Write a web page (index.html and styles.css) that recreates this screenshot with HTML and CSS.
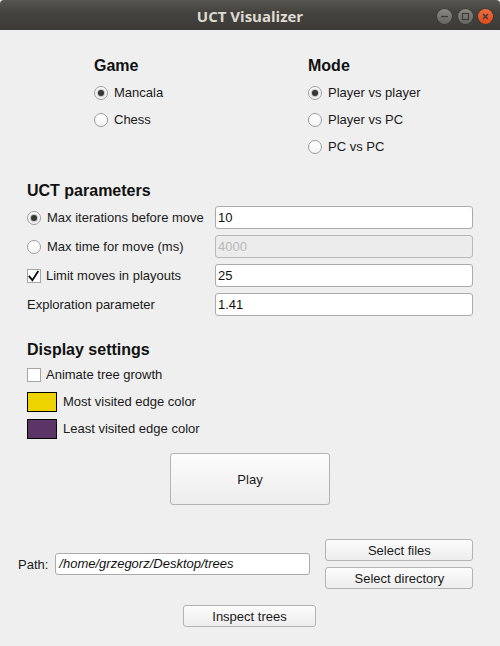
FILE: index.html
```html
<!DOCTYPE html>
<html>
<head>
<meta charset="utf-8">
<title>UCT Visualizer</title>
<link rel="stylesheet" href="styles.css">
</head>
<body>
<div class="window">
  <header class="titlebar">
    <div class="tb-side"></div>
    <div class="title">UCT Visualizer</div>
    <div class="tb-side wbtns">
      <span class="wbtn"><svg width="15" height="15" viewBox="0 0 15 15"><path d="M4 7.5 H11" stroke="#3c3b37" stroke-width="1.3" fill="none"/></svg></span>
      <span class="wbtn"><svg width="15" height="15" viewBox="0 0 15 15"><rect x="4.5" y="4.5" width="6" height="6" stroke="#3c3b37" stroke-width="1.2" fill="none"/></svg></span>
      <span class="wbtn close"><svg width="15" height="15" viewBox="0 0 15 15"><path d="M5 5 L10 10 M10 5 L5 10" stroke="#3c3b37" stroke-width="1.4" fill="none"/></svg></span>
    </div>
  </header>

  <main class="content">
    <section class="modes">
      <div class="col col-game">
        <h2 class="heading">Game</h2>
        <div class="opt"><span class="radio checked"></span>Mancala</div>
        <div class="opt"><span class="radio"></span>Chess</div>
      </div>
      <div class="col">
        <h2 class="heading">Mode</h2>
        <div class="opt"><span class="radio checked"></span>Player vs player</div>
        <div class="opt"><span class="radio"></span>Player vs PC</div>
        <div class="opt"><span class="radio"></span>PC vs PC</div>
      </div>
    </section>

    <section class="block">
      <h2 class="heading heading-uct">UCT parameters</h2>
      <div class="params">
        <div class="plabel"><span class="radio checked"></span>Max iterations before move</div>
        <div class="field">10</div>
        <div class="plabel"><span class="radio"></span>Max time for move (ms)</div>
        <div class="field disabled">4000</div>
        <div class="plabel plabel-cb"><span class="check"><svg width="14" height="14" viewBox="0 0 14 14"><path d="M2.4 7.6 L5.4 11.2 L10.8 2.8" stroke="#111" stroke-width="1.9" fill="none" stroke-linecap="square"/></svg></span>Limit moves in playouts</div>
        <div class="field">25</div>
        <div class="plabel">Exploration parameter</div>
        <div class="field">1.41</div>
      </div>
    </section>

    <section class="block">
      <h2 class="heading">Display settings</h2>
      <div class="drow drow-cb"><span class="check"></span>Animate tree growth</div>
      <div class="drow"><span class="swatch swatch-yellow"></span>Most visited edge color</div>
      <div class="drow"><span class="swatch swatch-purple"></span>Least visited edge color</div>
    </section>

    <div class="play-wrap">
      <button class="btn btn-play">Play</button>
    </div>

    <div class="path-row">
      <span class="path-label">Path:</span>
      <div class="field path-field">/home/grzegorz/Desktop/trees</div>
      <div class="path-btns">
        <button class="btn btn-small">Select files</button>
        <button class="btn btn-small">Select directory</button>
      </div>
    </div>

    <div class="inspect-wrap">
      <button class="btn btn-inspect">Inspect trees</button>
    </div>
  </main>
</div>
</body>
</html>
```

FILE: styles.css
```css
* { box-sizing: border-box; }

html, body {
  margin: 0;
  padding: 0;
}

body {
  width: 500px;
  height: 646px;
  overflow: hidden;
  background: #efefef;
  font-family: "Liberation Sans", Arial, sans-serif;
  font-size: 13px;
  color: #1a1a1a;
}

.window {
  width: 500px;
  height: 646px;
  background: #efefef;
}

/* title bar */
.titlebar {
  height: 30px;
  display: grid;
  grid-template-columns: 1fr auto 1fr;
  align-items: center;
  background: linear-gradient(#57554f, #45433f 40%, #3c3b37);
  border-top-left-radius: 4px;
  border-top-right-radius: 4px;
}

.title {
  font-family: "Open Sans", "DejaVu Sans", sans-serif;
  font-weight: bold;
  font-size: 15px;
  color: #dfdbd2;
  line-height: 30px;
  padding-top: 1px;
}

.wbtns {
  display: flex;
  justify-content: flex-end;
  align-items: center;
  gap: 5.5px;
  padding-right: 7px;
  padding-top: 1px;
}

.wbtn {
  width: 15px;
  height: 15px;
  border-radius: 50%;
  background: linear-gradient(#8a8883, #67655f);
  box-shadow: 0 0 0 0.5px #35342f;
  display: flex;
}

.wbtn.close {
  background: linear-gradient(#f36b3d, #dc4a1a);
}

/* content */
.content {
  padding-top: 25px;
}

.heading {
  margin: 0;
  font-size: 16px;
  font-weight: bold;
  line-height: 22px;
  color: #111;
}

.modes {
  display: flex;
  padding-left: 94px;
}

.col-game {
  width: 214px;
}

.modes .heading {
  margin-bottom: 2px;
}

.opt {
  height: 27px;
  display: flex;
  align-items: center;
  gap: 6px;
}

.radio {
  width: 14px;
  height: 14px;
  border-radius: 50%;
  border: 1px solid #9d9d9d;
  background: linear-gradient(#ffffff, #f4f4f4);
  display: flex;
  align-items: center;
  justify-content: center;
  flex: none;
}

.radio.checked::after {
  content: "";
  width: 6px;
  height: 6px;
  border-radius: 50%;
  background: #363636;
  box-shadow: 0 0 1px 1px rgba(80, 80, 80, 0.35);
}

.check {
  width: 14px;
  height: 14px;
  border: 1px solid #a6a6a6;
  background: #ffffff;
  flex: none;
  display: flex;
  align-items: center;
  justify-content: center;
}

.check svg {
  margin: -1px;
}

.block {
  margin-top: 20px;
  padding-left: 27px;
  padding-right: 27px;
}

.heading-uct {
  margin-bottom: 1px;
}

.params {
  display: grid;
  grid-template-columns: 188px 1fr;
  grid-auto-rows: 29px;
  align-items: center;
}

.plabel {
  display: flex;
  align-items: center;
  gap: 6px;
}

.plabel-cb {
  gap: 5px;
}

.field {
  height: 23px;
  border: 1px solid #ababab;
  border-radius: 3px;
  background: #ffffff;
  padding-left: 2px;
  line-height: 21px;
  color: #111;
  white-space: nowrap;
  overflow: hidden;
}

.field.disabled {
  background: #ececec;
  border-color: #b9b9b9;
  color: #b8b8b8;
}

.drow {
  height: 27px;
  display: flex;
  align-items: center;
  gap: 6px;
}

.drow-cb {
  gap: 5px;
}

.swatch {
  width: 30px;
  height: 20px;
  border: 1.5px solid #000;
  flex: none;
}

.swatch-yellow { background: #edd400; }
.swatch-purple { background: #5c3566; }

/* buttons */
.btn {
  font-family: "Liberation Sans", Arial, sans-serif;
  font-size: 13px;
  color: #1a1a1a;
  border: 1px solid #b3b3b3;
  border-radius: 3px;
  background: linear-gradient(#fcfcfc, #ededed);
  padding: 0;
  margin: 0;
}

.play-wrap {
  margin-top: 11px;
  display: flex;
  justify-content: center;
}

.btn-play {
  width: 160px;
  height: 52px;
}

.path-row {
  margin-top: 34px;
  display: flex;
  align-items: center;
  padding-left: 18px;
}

.path-label {
  margin-right: 7px;
}

.path-field {
  width: 255px;
  height: 22px;
  line-height: 20px;
  font-style: italic;
  padding-left: 3px;
}

.path-btns {
  margin-left: 15px;
  display: flex;
  flex-direction: column;
  gap: 6px;
}

.btn-small {
  width: 148px;
  height: 22px;
}

.inspect-wrap {
  margin-top: 16px;
  display: flex;
  justify-content: center;
  padding-right: 1px;
}

.btn-inspect {
  width: 133px;
  height: 22px;
}
```
